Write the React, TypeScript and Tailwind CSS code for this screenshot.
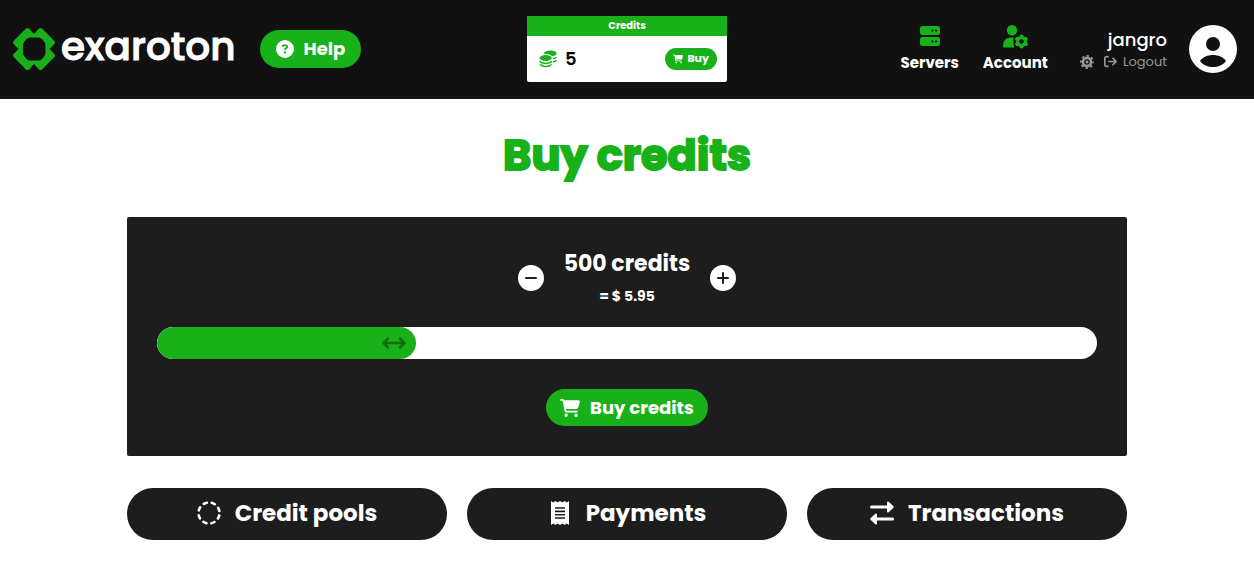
import { useState } from "react";
import { FaArrowRightFromBracket, FaCartShopping, FaCircleQuestion } from "react-icons/fa6";

const MAX_CREDITS = 2000;
const STEP = 100;
const PRICE_PER_CREDIT = 0.0119;

function LogoMark() {
  return (
    <svg viewBox="0 0 42 42" className="size-[42px] shrink-0" aria-hidden="true">
      <path
        fill="#19b119"
        fillRule="evenodd"
        d="M13 .6q1.500-1 3 0L21 6 26 .6q1.500-1 3 0L41.400 13q1 1.500 0 3L36.500 21l4.900 5q1 1.500 0 3L29 41.400q-1.500 1-3 0L21 36 16 41.400q-1.500 1-3 0L.6 29q-1-1.500 0-3L5.500 21 .6 16q-1-1.500 0-3ZM17 9.500q-2 0-3.500 1.500L11.500 13.500q-1.500 1.500-1.500 3.500v8q0 2 1.500 3.500l2 2.500q1.500 1.500 3.500 1.500h8.500q2 0 3.500-1.500l2-2.500q1.500-1.500 1.500-3.500v-8q0-2-1.500-3.500l-2-2.500q-1.500-1.500-3.500-1.500Z"
      />
    </svg>
  );
}

function CoinsIcon() {
  return (
    <svg viewBox="0 0 18 18" className="size-[18px]" fill="none" aria-hidden="true">
      <path fill="#19b119" d="M4.500 3.700C5 1.800 7.800.5 11.300.5c3.500 0 6.200 1.300 6.200 2.900 0 1.500-1.900 2.500-4.500 2.900-1-1.700-4.500-2.800-8.500-2.600Z" />
      <ellipse cx="6.700" cy="8" rx="6.200" ry="2.900" fill="#19b119" />
      <path stroke="#19b119" strokeWidth="1.500" strokeLinecap="round" d="M1 11.600c2 2.400 9.500 2.400 11.500 0M1.500 14.700c2.200 2.300 8.300 2.300 10.500 0M14.700 8.600l2.300-1M14.700 11.800l2.300-1" />
    </svg>
  );
}

function ServersIcon() {
  return (
    <svg viewBox="0 0 20 24" className="h-6 w-5" aria-hidden="true">
      <rect y="1" width="20" height="9" rx="2.500" fill="#19b119" />
      <rect y="12" width="20" height="9" rx="2.500" fill="#19b119" />
      <g fill="#111">
        <circle cx="12.500" cy="5.500" r="1.100" />
        <circle cx="16" cy="5.500" r="1.100" />
        <circle cx="12.500" cy="16.500" r="1.100" />
        <circle cx="16" cy="16.500" r="1.100" />
      </g>
    </svg>
  );
}

function AccountIcon() {
  return (
    <svg viewBox="0 0 25 24" className="h-6 w-[25px]" fill="none" aria-hidden="true">
      <circle cx="9" cy="5.200" r="5.200" fill="#19b119" />
      <path fill="#19b119" d="M0 21c0-5 3-8.500 7.500-8.500h3.300c-.7 2-.3 3-.3 4.500 0 2 .3 3.500.8 5.500H1.500Q0 22.500 0 21Z" />
      <circle cx="18.500" cy="16.500" r="3.900" stroke="#19b119" strokeWidth="3.200" />
      <path stroke="#19b119" strokeWidth="4" strokeLinecap="round" d="M18.500 11.500v.5M18.500 21v.5M14.200 14l.4.200M22.400 18.800l.4.200M14.200 19l.4-.2M22.400 14.200l.4-.2" />
    </svg>
  );
}

function CogIcon() {
  return (
    <svg viewBox="0 0 24 24" className="size-[14px]" fill="none" stroke="currentColor" aria-hidden="true">
      <circle cx="12" cy="12" r="7" strokeWidth="4.500" />
      <circle cx="12" cy="12" r="1.500" strokeWidth="2" />
      <circle cx="12" cy="12" r="10.500" strokeWidth="3" strokeDasharray="4 4.250" strokeDashoffset="2" />
    </svg>
  );
}

function AvatarIcon() {
  return (
    <svg viewBox="0 0 48 48" className="size-12" aria-hidden="true">
      <circle cx="24" cy="24" r="24" fill="#fff" />
      <circle cx="24" cy="19" r="7" fill="#111" />
      <path fill="#111" d="M11 36c2.500-4 8-6 13-6s10.500 2 13 6c-3 4-8 6-13 6s-10-2-13-6Z" />
    </svg>
  );
}

function DashedCircleIcon() {
  return (
    <svg viewBox="0 0 24 24" className="size-6" fill="none" aria-hidden="true">
      <circle cx="12" cy="12" r="10.500" stroke="#fff" strokeWidth="2.600" strokeLinecap="round" strokeDasharray="3.300 4.947" strokeDashoffset="-2.470" />
    </svg>
  );
}

function ReceiptIcon() {
  return (
    <svg viewBox="0 0 24 24" className="size-6" aria-hidden="true">
      <path fill="#fff" d="M3 0l2.200 1.500L7.500 0l2.200 1.500L12 0l2.300 1.500L16.500 0l2.300 1.500L21 0v24l-2.200-1.500L16.500 24l-2.200-1.500L12 24l-2.300-1.500L7.500 24l-2.300-1.500L3 24Z" />
      <path stroke="#1d1d1d" strokeWidth="1.600" d="M7 7h10M7 10.400h10M7 13.700h10M7 17h10" />
    </svg>
  );
}

function TransferIcon() {
  return (
    <svg viewBox="0 0 24 24" className="size-6" fill="#fff" aria-hidden="true">
      <path stroke="#fff" strokeWidth="3" strokeLinecap="round" d="M1.500 6H18M6 18h16.500" />
      <path stroke="#fff" strokeWidth="2" strokeLinejoin="round" d="M18 1.500 22.700 6 18 10.500ZM6 13.500 1.300 18 6 22.500Z" />
    </svg>
  );
}

const links = [
  { label: "Credit pools", icon: <DashedCircleIcon /> },
  { label: "Payments", icon: <ReceiptIcon /> },
  { label: "Transactions", icon: <TransferIcon /> },
];

function Header() {
  return (
    <header className="grid h-[99px] grid-cols-[1fr_200px_1fr] items-center bg-[#111] px-[13px] pb-[2px] text-white">
      <div className="flex items-center gap-6">
        <a href="#" className="flex items-center gap-[6px]">
          <LogoMark />
          <span className="pb-1 text-[39px] leading-10 font-medium [-webkit-text-stroke:1px_#fff]">exaroton</span>
        </a>
        <a href="#" className="flex h-[38px] items-center gap-[10px] rounded-full bg-[#19b119] px-4 text-lg font-bold">
          <FaCircleQuestion className="size-[18px]" />
          Help
        </a>
      </div>

      <div className="overflow-hidden rounded-xs bg-white">
        <div className="bg-[#19b119] text-center text-[10px] leading-5 font-bold">Credits</div>
        <div className="flex h-[46px] items-center pr-[10px] pl-3">
          <CoinsIcon />
          <span className="pl-2 text-lg font-semibold text-black">5</span>
          <button className="ml-auto flex h-[22px] items-center gap-1 rounded-full bg-[#19b119] px-2 text-[11px] font-bold">
            <FaCartShopping className="size-[10px]" />
            Buy
          </button>
        </div>
      </div>

      <div className="flex items-center justify-end pr-1">
        <nav className="flex gap-6 pr-8 text-[15px] leading-5 font-bold">
          <a href="#" className="flex flex-col items-center gap-1">
            <ServersIcon />
            Servers
          </a>
          <a href="#" className="flex flex-col items-center gap-1">
            <AccountIcon />
            Account
          </a>
        </nav>
        <div className="flex flex-col items-end pt-[2px] pr-[22px]">
          <span className="text-lg leading-6 font-medium">jangro</span>
          <div className="flex items-center gap-[10px] text-[13px] leading-5 text-[#999]">
            <button aria-label="Settings">
              <CogIcon />
            </button>
            <a href="#" className="flex items-center gap-[6px]">
              <FaArrowRightFromBracket className="size-[13px]" />
              Logout
            </a>
          </div>
        </div>
        <AvatarIcon />
      </div>
    </header>
  );
}

export default function App() {
  const [credits, setCredits] = useState(500);
  const ratio = credits / MAX_CREDITS;

  return (
    <div className="min-h-screen bg-white font-['Poppins','Inter',sans-serif]">
      <Header />
      <main className="mx-auto max-w-[1000px] pt-7">
        <h1 className="text-center text-[43px] leading-14 font-bold text-[#19b119] [-webkit-text-stroke:2px_#19b119]">Buy credits</h1>

        <section className="mt-[34px] rounded-xs bg-[#1d1d1d] p-[30px] text-white">
          <div className="mb-[18px] flex items-center justify-center gap-5">
            <button
              aria-label="Fewer credits"
              onClick={() => setCredits(Math.max(0, credits - STEP))}
              className="flex size-[26px] items-center justify-center rounded-full bg-white"
            >
              <svg viewBox="0 0 12 12" className="size-3" aria-hidden="true">
                <path stroke="#1d1d1d" strokeWidth="2" strokeLinecap="round" d="M1 6h10" />
              </svg>
            </button>
            <div className="flex flex-col items-center gap-[6px] pb-1">
              <span className="text-[22px] leading-[34px] font-bold">{credits} credits</span>
              <span className="text-sm leading-[18px] font-bold">= $ {(credits * PRICE_PER_CREDIT).toFixed(2)}</span>
            </div>
            <button
              aria-label="More credits"
              onClick={() => setCredits(Math.min(MAX_CREDITS, credits + STEP))}
              className="flex size-[26px] items-center justify-center rounded-full bg-white"
            >
              <svg viewBox="0 0 12 12" className="size-3" aria-hidden="true">
                <path stroke="#1d1d1d" strokeWidth="2" strokeLinecap="round" d="M1 6h10M6 1v10" />
              </svg>
            </button>
          </div>

          <div className="relative h-8 overflow-hidden rounded-full bg-white">
            <div
              className="flex h-8 items-center justify-end rounded-full bg-[#19b119] pr-[10px]"
              style={{ width: `calc(32px + (100% - 32px) * ${ratio})` }}
            >
              <svg viewBox="0 0 24 12" className="h-3 w-6 shrink-0" fill="none" aria-hidden="true">
                <path stroke="#106e10" strokeWidth="2.500" strokeLinecap="round" strokeLinejoin="round" d="M6 1.500 1.500 6 6 10.500M18 1.500 22.500 6 18 10.500M2 6h20" />
              </svg>
            </div>
            <input
              type="range"
              aria-label="Credits"
              min={0}
              max={MAX_CREDITS}
              step={STEP}
              value={credits}
              onChange={(e) => setCredits(Number(e.target.value))}
              className="absolute inset-0 size-full cursor-pointer opacity-0"
            />
          </div>

          <button className="mx-auto mt-[30px] flex h-[37px] items-center gap-[10px] rounded-full bg-[#19b119] px-[14px] text-lg font-bold">
            <FaCartShopping className="size-5" />
            Buy credits
          </button>
        </section>

        <div className="mt-8 grid grid-cols-3 gap-5">
          {links.map((link) => (
            <a
              key={link.label}
              href="#"
              className="flex h-[52px] items-center justify-center gap-[14px] rounded-full bg-[#1d1d1d] pb-[2px] text-[23px] font-bold text-white"
            >
              {link.icon}
              {link.label}
            </a>
          ))}
        </div>
      </main>
    </div>
  );
}
